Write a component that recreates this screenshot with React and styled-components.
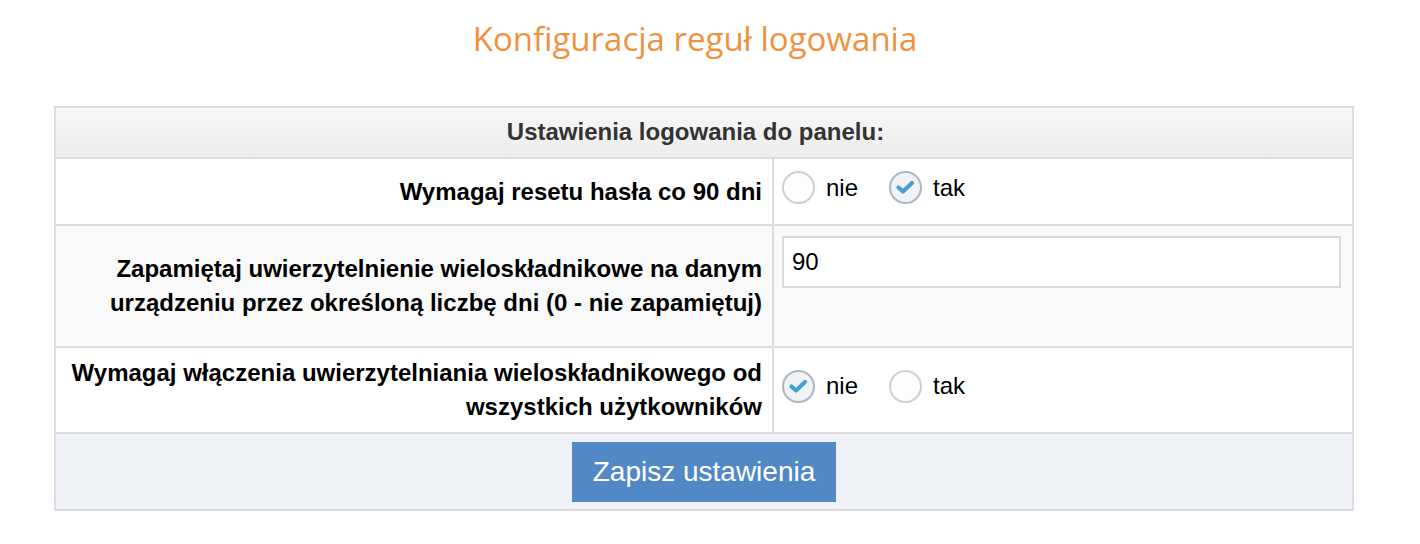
import React, { useState } from "react";
import styled, { createGlobalStyle } from "styled-components";

const Global = createGlobalStyle`
  html, body { margin: 0; padding: 0; background: #ffffff; }
  body { font-family: "Liberation Sans", Arial, Helvetica, sans-serif; color: #000; }
  * { box-sizing: border-box; }
`;

const Page = styled.div`
  width: 1300px;
  margin-left: 54px;
  padding-top: 14px;
`;

const Title = styled.h1`
  margin: 0 0 43px;
  padding-right: 18px;
  font-family: "Open Sans", "Liberation Sans", sans-serif;
  font-weight: 400;
  font-size: 33px;
  line-height: 49px;
  color: #f0913d;
  text-align: center;
`;

const Panel = styled.div`
  border: 2px solid #dddddd;
  width: 100%;
`;

const Header = styled.div`
  padding: 7px 17px 8px 0;
  background: linear-gradient(#f7f7f7, #ececec);
  font-size: 24px;
  line-height: 34px;
  font-weight: 700;
  color: #333333;
  text-align: center;
`;

const Row = styled.div`
  display: grid;
  grid-template-columns: 718px 1fr;
  border-top: 2px solid #dddddd;
  min-height: ${(p) => p.$minHeight}px;
  background: ${(p) => (p.$shaded ? "#f9f9f9" : "#ffffff")};
`;

const Label = styled.div`
  display: flex;
  align-items: center;
  justify-content: flex-end;
  text-align: right;
  padding: 8px 10px;
  border-right: 2px solid #dddddd;
  font-size: 24px;
  line-height: 34px;
  font-weight: 700;
`;

const Field = styled.div`
  display: flex;
  align-items: ${(p) => (p.$top ? "flex-start" : "center")};
  padding: ${(p) => (p.$top ? "10px 11px 0 8px" : "0 11px 8px 8px")};
`;

const RadioGroup = styled.div`
  display: flex;
  align-items: center;
`;

const Option = styled.label`
  display: flex;
  align-items: center;
  margin-right: 31px;
  cursor: pointer;
  font-size: 24px;
  line-height: 34px;
`;

const Circle = styled.span`
  width: 33px;
  height: 33px;
  border-radius: 50%;
  border: 2px solid ${(p) => (p.$checked ? "#aeb7c0" : "#cfcfcf")};
  background: ${(p) => (p.$checked ? "#eef3f8" : "#fdfdfd")};
  display: flex;
  align-items: center;
  justify-content: center;
  margin-right: 11px;
  flex: none;
`;

const HiddenInput = styled.input`
  display: none;
`;

const TextInput = styled.input`
  width: 100%;
  height: 52px;
  border: 2px solid #d9d9d9;
  background: #ffffff;
  padding: 0 8px;
  font-family: "Liberation Sans", Arial, sans-serif;
  font-size: 24px;
  color: #000;
  outline: none;
`;

const Footer = styled.div`
  border-top: 2px solid #dddddd;
  background: #eff2f7;
  padding: 8px 0 7px;
  display: flex;
  justify-content: center;
`;

const Button = styled.button`
  height: 60px;
  padding: 0 21px;
  border: none;
  background: #5288c6;
  color: #ffffff;
  font-family: "Liberation Sans", Arial, sans-serif;
  font-size: 28px;
  cursor: pointer;
`;

const CheckWrap = styled.span`
  position: relative;
  width: 33px;
  height: 33px;
  margin: -2px;
`;

const Check = () => (
  <svg width="33" height="33" viewBox="0 0 33 33" style={{ position: "absolute" }}>
    <path d="M9.5 16.5 L14 20.5 L23 12" fill="none" stroke="#4a9dd0" strokeWidth="4.2" strokeLinecap="round" strokeLinejoin="round" />
  </svg>
);

const Radio = ({ name, value, checked, onChange, children }) => (
  <Option>
    <HiddenInput type="radio" name={name} value={value} checked={checked} onChange={() => onChange(value)} />
    <Circle $checked={checked}>{checked && <CheckWrap><Check /></CheckWrap>}</Circle>
    {children}
  </Option>
);

export default function App() {
  const [reset, setReset] = useState("tak");
  const [mfa, setMfa] = useState("nie");
  const [days, setDays] = useState("90");
  return (
    <>
      <Global />
      <Page>
        <Title>Konfiguracja reguł logowania</Title>
        <Panel>
          <Header>Ustawienia logowania do panelu:</Header>
          <Row $minHeight={67}>
            <Label>Wymagaj resetu hasła co 90 dni</Label>
            <Field>
              <RadioGroup>
                <Radio name="reset" value="nie" checked={reset === "nie"} onChange={setReset}>nie</Radio>
                <Radio name="reset" value="tak" checked={reset === "tak"} onChange={setReset}>tak</Radio>
              </RadioGroup>
            </Field>
          </Row>
          <Row $minHeight={122} $shaded>
            <Label>
              Zapamiętaj uwierzytelnienie wieloskładnikowe na danym
              <br />
              urządzeniu przez określoną liczbę dni (0 - nie zapamiętuj)
            </Label>
            <Field $top>
              <TextInput value={days} onChange={(e) => setDays(e.target.value)} />
            </Field>
          </Row>
          <Row $minHeight={84}>
            <Label>
              Wymagaj włączenia uwierzytelniania wieloskładnikowego od
              <br />
              wszystkich użytkowników
            </Label>
            <Field>
              <RadioGroup>
                <Radio name="mfa" value="nie" checked={mfa === "nie"} onChange={setMfa}>nie</Radio>
                <Radio name="mfa" value="tak" checked={mfa === "tak"} onChange={setMfa}>tak</Radio>
              </RadioGroup>
            </Field>
          </Row>
          <Footer>
            <Button type="button">Zapisz ustawienia</Button>
          </Footer>
        </Panel>
      </Page>
    </>
  );
}
